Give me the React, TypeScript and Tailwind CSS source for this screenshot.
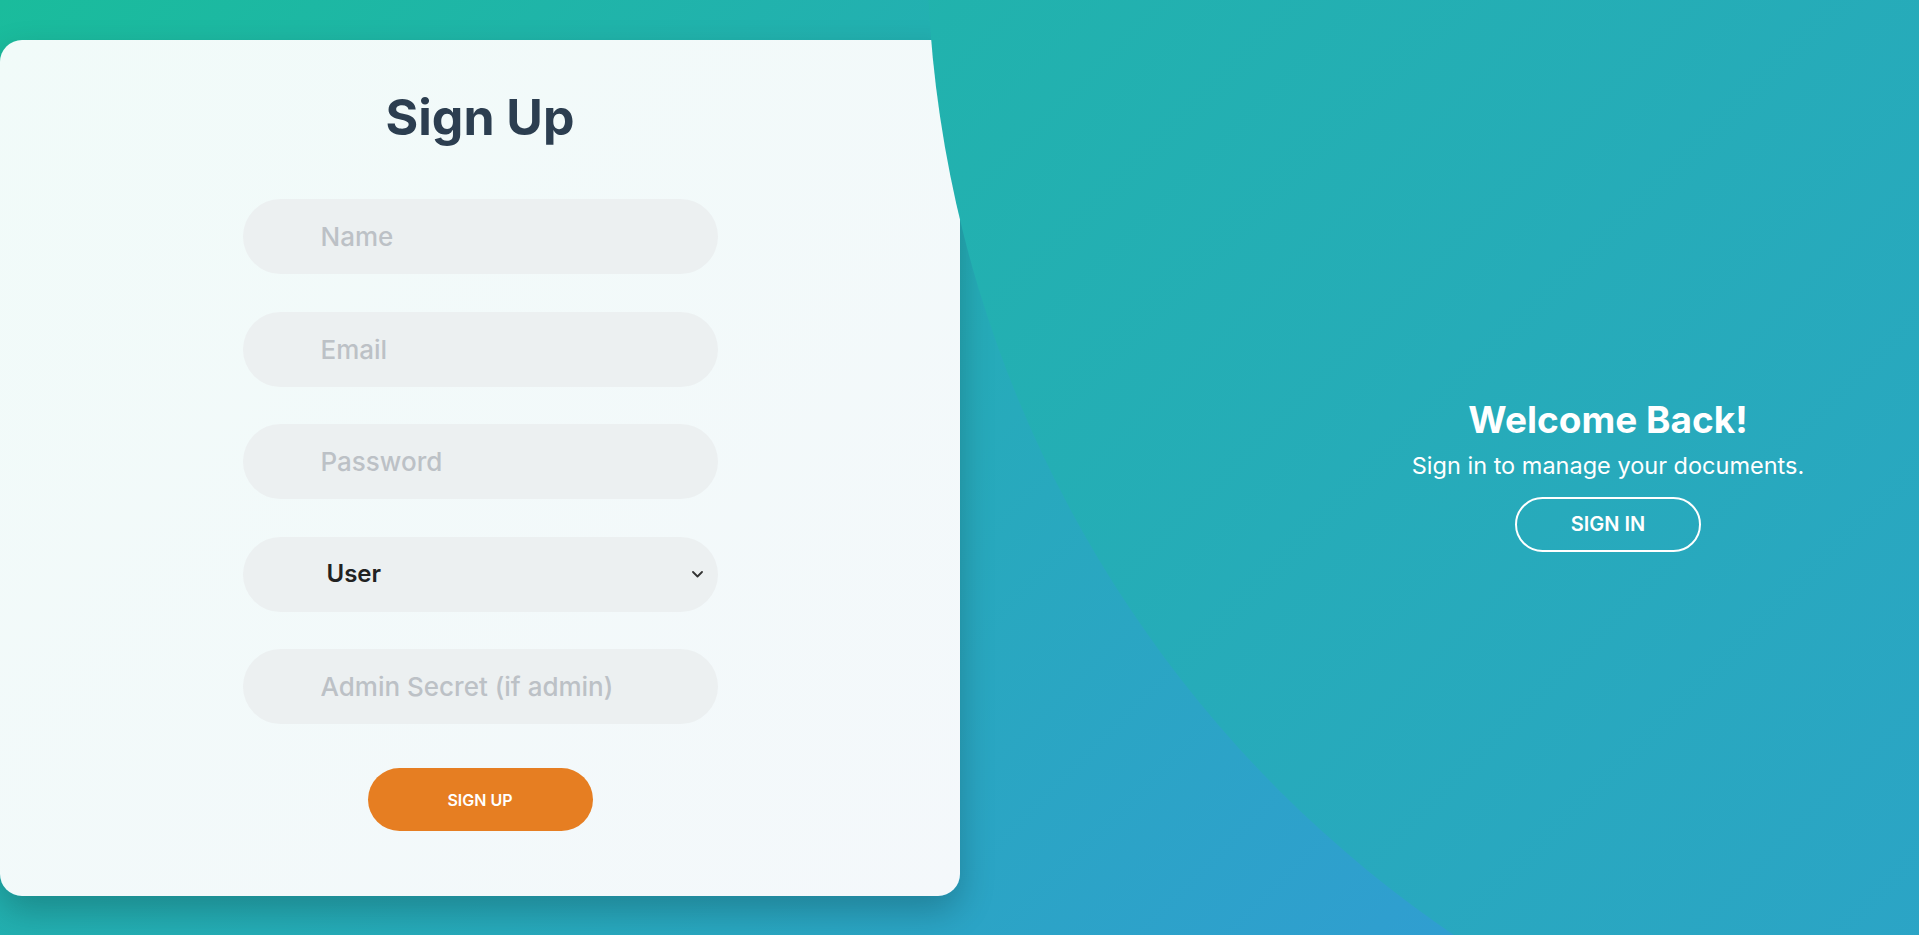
import React from "react";

function Field({ placeholder }: { placeholder: string }) {
  return (
    <input
      readOnly
      placeholder={placeholder}
      className="h-[75px] w-full rounded-full bg-[#ecf0f1] pl-[78px] pr-6 text-[26px] font-medium text-[#333] outline-none placeholder:text-[#bcc1c6]"
    />
  );
}

export default function App() {
  return (
    <div className="relative h-[935px] w-full overflow-hidden bg-[linear-gradient(135deg,#1abc9c_0%,#3498db_100%)] [font-family:Inter,sans-serif]">
      <div className="relative flex h-full">
        <div className="relative z-0 mt-[40px] flex h-[856px] w-[960px] shrink-0 flex-col items-center rounded-[22px] bg-[linear-gradient(135deg,#f1fbf9,#f4f8fb)] pt-[52px] shadow-[0_15px_35px_rgba(0,0,0,0.22)]">
          <h1 className="text-[50px] font-bold leading-none text-[#2c3e50]">Sign Up</h1>
          <div className="mt-[57px] flex w-[475px] flex-col gap-[37.5px]">
            <Field placeholder="Name" />
            <Field placeholder="Email" />
            <Field placeholder="Password" />
            <div className="flex h-[75px] w-full items-center justify-between rounded-full bg-[#ecf0f1] pl-[84px] pr-[15px]">
              <span className="text-[24px] font-semibold text-[#222]">User</span>
              <svg width="11" height="7" viewBox="0 0 11 7" fill="none">
                <polyline points="1,1 5.5,5.5 10,1" stroke="#333" strokeWidth="1.8" strokeLinecap="round" strokeLinejoin="round" />
              </svg>
            </div>
            <Field placeholder="Admin Secret (if admin)" />
          </div>
          <button className="mt-[44px] h-[63px] w-[225px] rounded-full bg-[#e67e22] text-[16px] font-semibold text-white">
            SIGN UP
          </button>
        </div>

        <div className="absolute left-[927px] top-[-1263px] z-10 h-[2406px] w-[2406px] rounded-full bg-[linear-gradient(-45deg,#3498db_0%,#1abc9c_100%)]" />

        <div className="relative z-20 flex flex-1 flex-col items-center pl-[337px] pt-[401px] text-white">
          <h2 className="text-[37px] font-bold leading-none">Welcome Back!</h2>
          <p className="mt-[16px] text-[23.5px] leading-none">Sign in to manage your documents.</p>
          <button className="mt-[19px] h-[55px] w-[186px] rounded-full border-2 border-white text-[20px] font-semibold">
            SIGN IN
          </button>
        </div>
      </div>
    </div>
  );
}
